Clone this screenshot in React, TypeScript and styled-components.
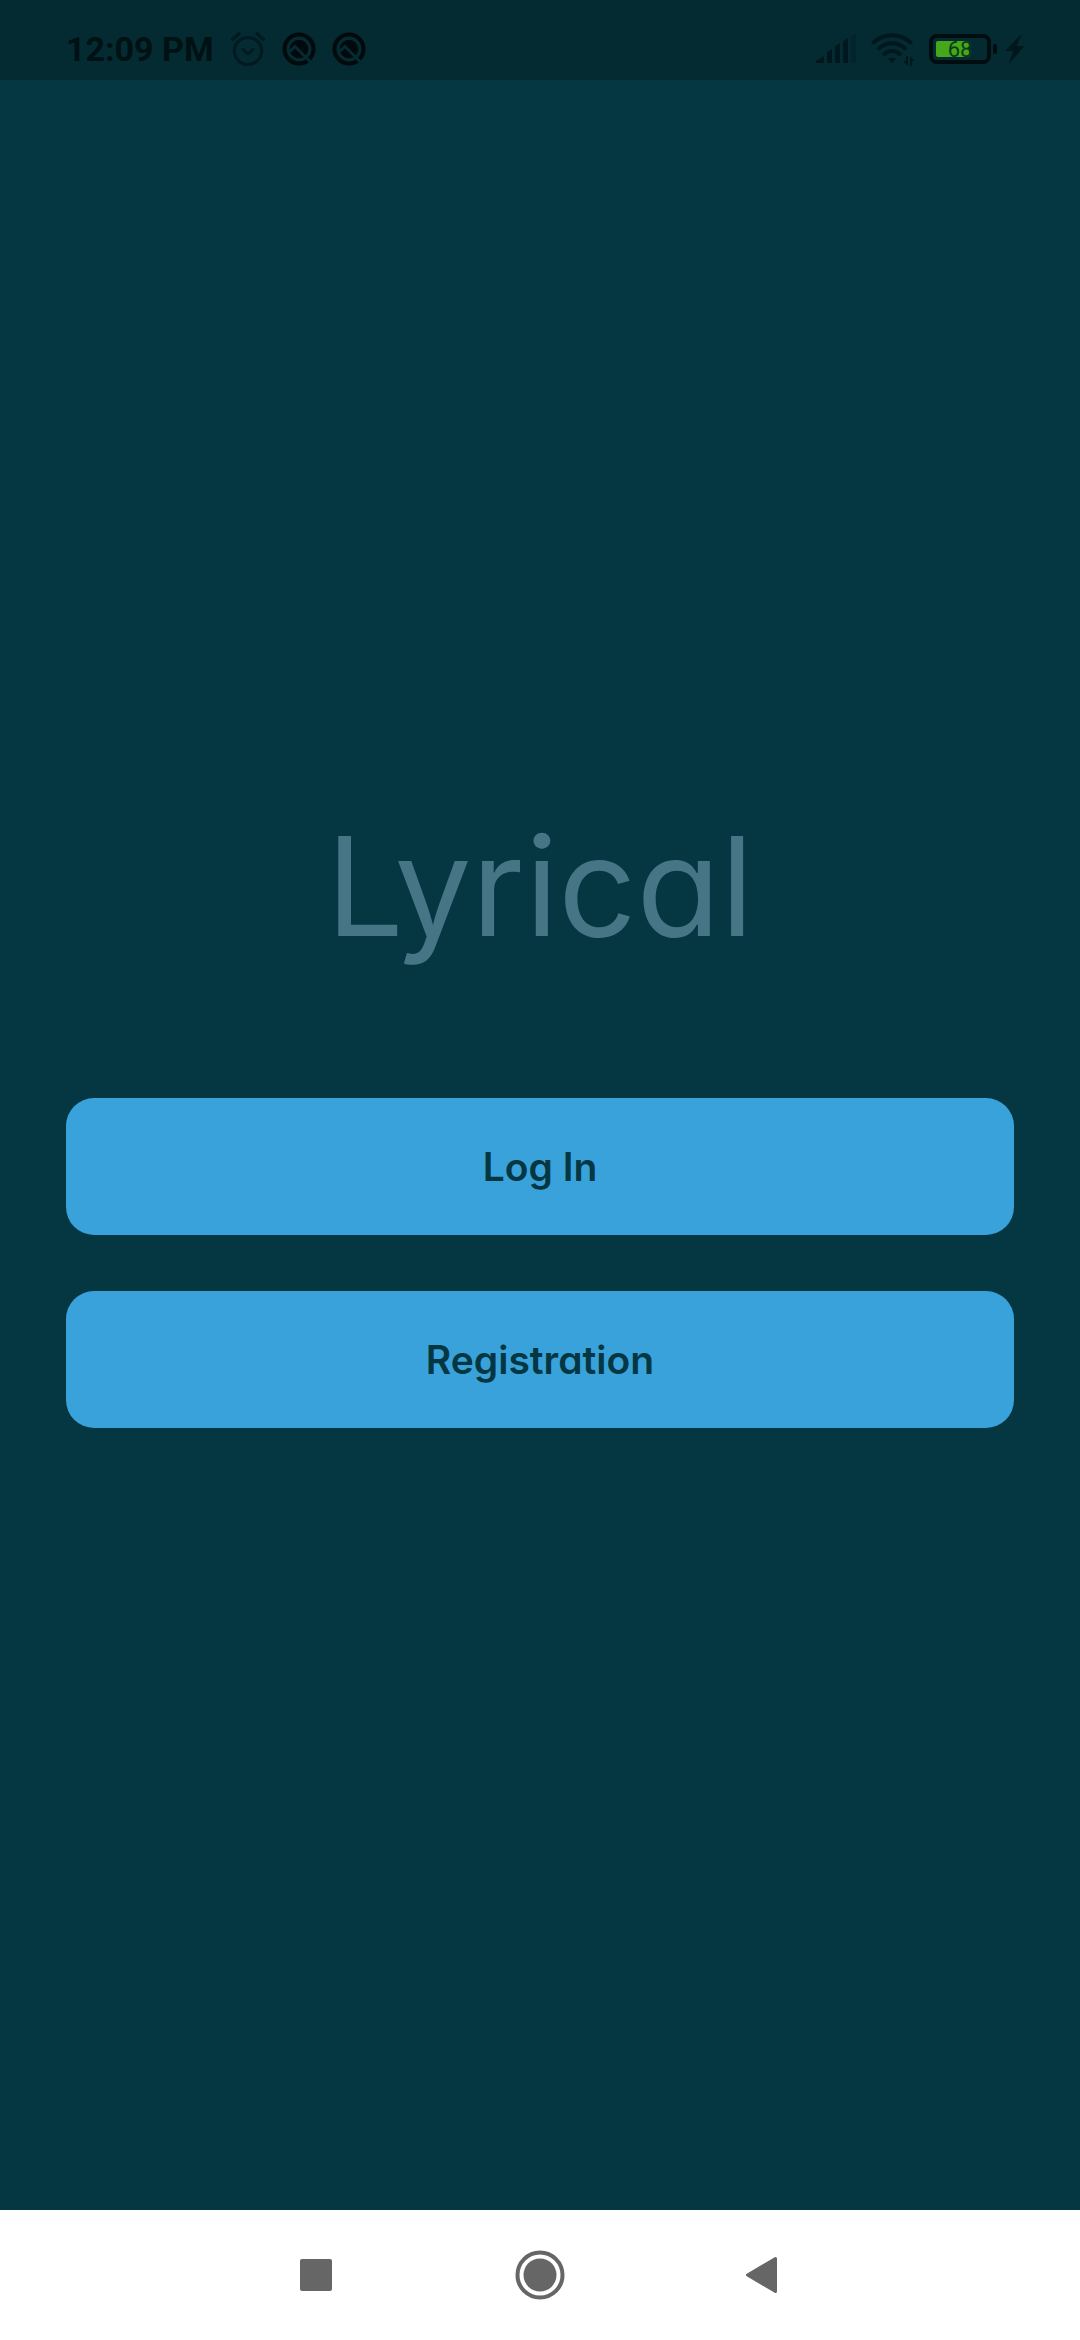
import React from "react";
import styled, { createGlobalStyle } from "styled-components";

const GlobalStyle = createGlobalStyle`
  * { box-sizing: border-box; }
  body { margin: 0; background: #053742; }
`;

const Screen = styled.div`
  display: flex;
  flex-direction: column;
  min-height: 100vh;
  background: #053742;
  font-family: Inter, "Noto Sans", sans-serif;
  font-feature-settings: "cv11";
`;

const StatusBar = styled.header`
  display: flex;
  align-items: center;
  justify-content: space-between;
  height: 80px;
  padding: 18px 55px 0 66px;
  background: #042b32;
  color: #001114;
`;

const StatusGroup = styled.div<{ $gap: number }>`
  display: flex;
  align-items: center;
  gap: ${(p) => p.$gap}px;

  svg {
    display: block;
  }
`;

const Clock = styled.time`
  font: 700 34px/36px Roboto, sans-serif;
  white-space: nowrap;
`;

const Main = styled.main`
  flex: 1;
  display: flex;
  flex-direction: column;
  justify-content: center;
  padding: 0 66px 80px;
`;

const Title = styled.h1`
  margin: 0 0 108px;
  font-size: 137px;
  font-weight: 400;
  line-height: 208px;
  text-align: center;
  color: #467585;
`;

const Actions = styled.div`
  display: flex;
  flex-direction: column;
  gap: 56px;
`;

const ActionButton = styled.button`
  height: 137px;
  border: 0;
  border-radius: 28px;
  background: #39a2db;
  color: #053742;
  font-family: inherit;
  font-feature-settings: inherit;
  font-size: 39px;
  font-weight: 600;
  line-height: 60px;
  cursor: pointer;
`;

const NavBar = styled.nav`
  display: flex;
  align-items: center;
  justify-content: center;
  gap: 173px;
  height: 130px;
  background: #fff;
`;

const NavButton = styled.button`
  display: flex;
  width: 50px;
  height: 50px;
  padding: 0;
  border: 0;
  background: none;
  color: #666;
  cursor: pointer;
`;

const AlarmIcon = () => (
  <svg width="36" height="36" viewBox="0 0 36 36" fill="none" stroke="#001a20" strokeWidth="3" strokeLinecap="round" strokeLinejoin="round">
    <circle cx="18" cy="20" r="13.6" />
    <path d="M2.5 8.5 9 2.8M33.5 8.5 27 2.8" strokeWidth="3.4" />
    <path d="m13 18.500 5 4.500 5-4.500" />
  </svg>
);

const QIcon = () => (
  <svg width="34" height="34" viewBox="0 0 34 34" fill="none">
    <circle cx="17" cy="17" r="14.5" stroke="#00090b" strokeWidth="4" />
    <circle cx="17" cy="17" r="9.3" fill="#00090b" />
    <path d="M6.500 20.500 13 14.500 30 31.500" stroke="#042b32" strokeWidth="3" />
  </svg>
);

const SignalIcon = () => (
  <svg width="40" height="30" viewBox="0 0 40 30" fill="#00181d">
    <path d="M0 29v-2l8-5v7zM11 29V18.500l5-3.500v14zM19 29V12.500L24 9v20zM27 29V7.500L32 4v25z" />
    <path d="M35 29V2.500L40 0v29z" opacity="0.35" />
  </svg>
);

const WifiIcon = () => (
  <svg width="43" height="34" viewBox="0 0 43 34" fill="none" stroke="#00181d" strokeWidth="4" strokeLinecap="round">
    <path d="M2.500 10.500a27 27 0 0 1 37 0M8 16.500a19 19 0 0 1 26 0M13.500 22a11 11 0 0 1 15 0" />
    <path d="M17 27a6 6 0 0 1 8 0l-4 4z" fill="#00181d" stroke="none" />
    <path d="M35 24h2v10l-5-5h3zM39 34h2v-5h2.500L39 24z" fill="#00181d" stroke="none" />
  </svg>
);

const BatteryIcon = () => (
  <svg width="69" height="30" viewBox="0 0 69 30" role="img" aria-label="Battery">
    <rect x="2" y="2" width="58" height="26" rx="6" fill="none" stroke="#000d10" strokeWidth="4" />
    <rect x="64" y="10" width="4" height="10" rx="2" fill="#000d10" />
    <rect x="7" y="7" width="33" height="16" rx="2" fill="#45a81a" />
    <text x="31" y="23" textAnchor="middle" fontFamily="Roboto, sans-serif" fontSize="22" fill="#0d3b14">68</text>
  </svg>
);

const BoltIcon = () => (
  <svg width="20" height="30" viewBox="0 0 20 30" fill="#00181d">
    <path d="M16.500 0 0 17h8L4 30l15.500-18H12z" />
  </svg>
);

export default function App() {
  return (
    <>
      <GlobalStyle />
      <Screen>
        <StatusBar>
          <StatusGroup $gap={16}>
            <Clock dateTime="12:09">12:09 PM</Clock>
            <AlarmIcon />
            <QIcon />
            <QIcon />
          </StatusGroup>
          <StatusGroup $gap={15}>
            <SignalIcon />
            <WifiIcon />
            <StatusGroup $gap={7}>
              <BatteryIcon />
              <BoltIcon />
            </StatusGroup>
          </StatusGroup>
        </StatusBar>
        <Main>
          <Title>Lyrical</Title>
          <Actions>
            <ActionButton type="button">Log In</ActionButton>
            <ActionButton type="button">Registration</ActionButton>
          </Actions>
        </Main>
        <NavBar aria-label="System navigation">
          <NavButton type="button" aria-label="Recent apps">
            <svg width="50" height="50" viewBox="0 0 50 50" fill="currentColor">
              <rect x="8" y="9" width="32" height="32" rx="2" />
            </svg>
          </NavButton>
          <NavButton type="button" aria-label="Home">
            <svg width="50" height="50" viewBox="0 0 50 50">
              <circle cx="25" cy="25" r="22.500" fill="none" stroke="currentColor" strokeWidth="4" />
              <circle cx="25" cy="25" r="16.500" fill="currentColor" />
            </svg>
          </NavButton>
          <NavButton type="button" aria-label="Back">
            <svg width="50" height="50" viewBox="0 0 50 50" fill="currentColor" stroke="currentColor" strokeWidth="3" strokeLinejoin="round">
              <path d="M9.500 25 37.500 8.500v33z" />
            </svg>
          </NavButton>
        </NavBar>
      </Screen>
    </>
  );
}
